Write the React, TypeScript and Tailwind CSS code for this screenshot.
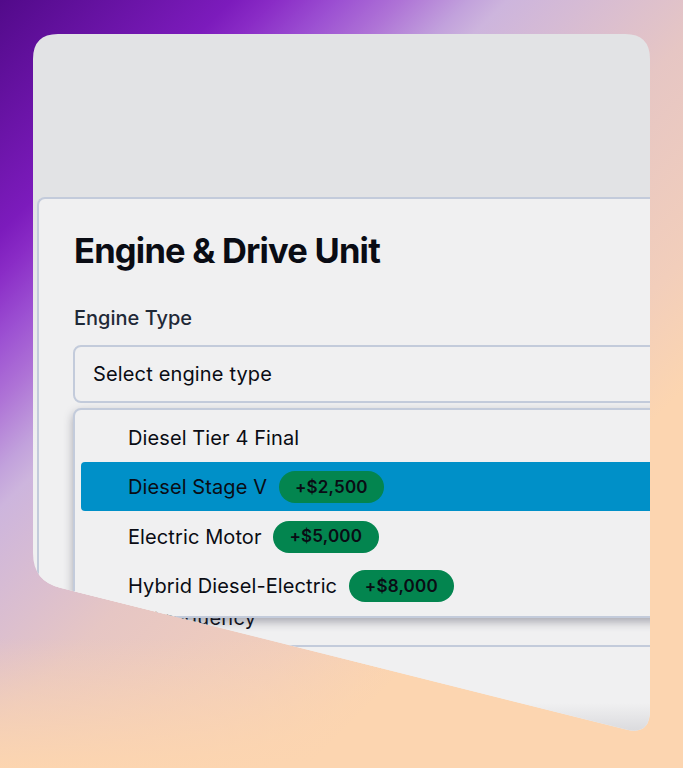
const options = [
  { name: "Diesel Tier 4 Final" },
  { name: "Diesel Stage V", price: "+$2,500", active: true },
  { name: "Electric Motor", price: "+$5,000" },
  { name: "Hybrid Diesel-Electric", price: "+$8,000" },
];

export default function App() {
  return (
    <div className="h-[768px] w-[683px] overflow-hidden bg-[linear-gradient(0deg,#fcd5b0_0%,transparent_17%),linear-gradient(135deg,#520a8a_0%,#7c1bbc_16%,#8a2cc6_19%,#9c50d2_23.4%,#ae72d6_27.6%,#c2a2dc_32.4%,#cdb5dd_35%,#e6c6c4_50%,#f2cebb_65%,#fcd5b0_74%)] pl-[33px] pt-[34px] font-['Inter',sans-serif]">
      <div className="flex h-[697px] w-[617px] flex-col overflow-hidden bg-[linear-gradient(180deg,#e2e3e5_24%,#f0f0f1_60%)] [clip-path:path('M25_0H592Q617_0_617_25V676Q617_701_594_695.7L27_553.7Q0_547_0_519V25Q0_0_25_0Z')]">
        <div className="h-[163px] shrink-0" />
        <div className="flex-1 pl-[4px]">
          {/* Card */}
          <div className="h-full w-[700px] rounded-tl-[8px] border-l-2 border-t-2 border-[#c3cbdb] bg-[#f0f0f1] pl-[34px] pt-[30px] text-[#0a0c14]">
            <h2 className="pl-[1px] text-[34.5px] font-bold leading-[44px] tracking-[-0.8px]">
              Engine &amp; Drive Unit
            </h2>
            <div className="mt-[31px] pl-[1px] text-[20px] font-medium leading-[28px] text-[#1f2937]">
              Engine Type
            </div>
            <div className="relative mt-[13px]">
              <div className="flex h-[58px] w-[640px] items-center rounded-[8px] border-2 border-[#c3cbdb] pl-[18px] text-[20px] tracking-[0.15px]">
                Select engine type
              </div>
              {/* Open menu */}
              <div className="absolute left-0 top-[63px] z-10 flex h-[210px] w-[640px] flex-col rounded-[8px] border-2 border-[#c3cbdb] bg-[#f0f0f1] px-[6px] pt-[2px] shadow-[0_4px_10px_rgba(60,60,80,0.4)]">
                {options.map((o) => (
                  <div
                    key={o.name}
                    className={`flex h-[49.5px] items-center rounded-[4px] pl-[47px] pt-[2px] text-[20px] tracking-[0.1px] ${o.active ? "bg-[#0090c8]" : ""}`}
                  >
                    {o.name}
                    {o.price && (
                      <span className="ml-[11.5px] flex h-[32px] w-[105.5px] items-center justify-center rounded-full bg-[#03854f] text-[17px] font-semibold tracking-[0.2px]">
                        {o.price}
                      </span>
                    )}
                  </div>
                ))}
              </div>
            </div>
            <div className="mt-[201px] w-[640px] pl-[1px] text-[20px] leading-[28px] tracking-[0.3px] text-[#0a0c14]">
              Voltage Frequency
            </div>
            <div className="mt-[13px] h-[58px] w-[640px] rounded-t-[8px] border-t-2 border-[#c3cbdb]" />
          </div>
        </div>
        <div className="h-[43px] shrink-0 bg-[linear-gradient(180deg,#f0f0f1,#cfcfd3)]" />
      </div>
    </div>
  );
}
